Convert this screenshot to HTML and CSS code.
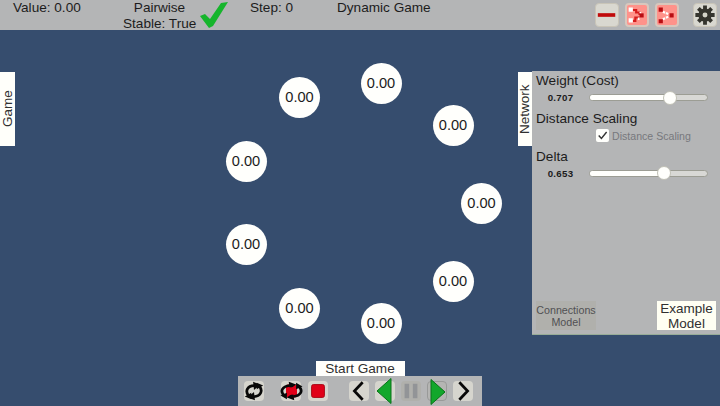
FILE: index.html
```html
<!DOCTYPE html>
<html lang="en">
<head>
<meta charset="utf-8">
<title>Network Game</title>
<link rel="stylesheet" href="styles.css">
</head>
<body>
<div class="app">
  <header class="topbar">
    <span class="value">Value: 0.00</span>
    <span class="stable">Pairwise<br>Stable: True</span>
    <svg class="tick" viewBox="0 0 28 28"><path d="M0 16 5 14 10 19 21 3 28 2 13 26 9 28Z" fill="#16b52c"/></svg>
    <span class="step">Step: 0</span>
    <span class="mode">Dynamic Game</span>
    <div class="tools">
      <button class="tool"><svg viewBox="0 0 24 24"><path d="M2 12H21" stroke="#c00b0b" stroke-width="4"/></svg></button>
      <button class="tool pink"><svg viewBox="0 0 24 24"><path d="M7 6H11V9H15V12M7 19H10V15H15" fill="none" stroke="#d51c1c" stroke-width="2.6"/><path d="M2 3H7V8H2ZM2 16H7V21H2Z" fill="#fff"/><path d="M15 10H20V15H15Z" fill="#b80d12"/><path d="M15 8H17V10H15ZM13 15H15V18H13Z" fill="#fff"/></svg></button>
      <button class="tool pink"><svg viewBox="0 0 24 24"><path d="M7 8 14 11M7 17 14 14" fill="none" stroke="#fff" stroke-width="2.6" stroke-dasharray="3 1"/><path d="M2 3H7V8H2ZM2 17H7V22H2ZM15 10H20V15H15Z" fill="#b80d12"/></svg></button>
      <button class="tool gear"><svg viewBox="0 0 24 24"><g stroke="#35352e" stroke-width="4.2"><path d="M12 1.5V22.5M1.5 12H22.5M4.8 4.8 19.2 19.2M19.2 4.8 4.8 19.2"/></g><circle cx="12" cy="12" r="7.2" fill="#35352e"/><circle cx="12" cy="12" r="2.7" fill="#d4d4c8"/></svg></button>
    </div>
  </header>
  <main class="stage">
    <button class="tab game">Game</button>
    <div class="canvas">
      <span class="node n1">0.00</span><span class="node n2">0.00</span><span class="node n3">0.00</span>
      <span class="node n4">0.00</span><span class="node n5">0.00</span><span class="node n6">0.00</span>
      <span class="node n7">0.00</span><span class="node n8">0.00</span><span class="node n9">0.00</span>
    </div>
    <button class="tab network">Network</button>
    <aside class="panel">
      <h2>Weight (Cost)</h2>
      <div class="row"><b>0.707</b><div class="track"><i class="fill" style="width:68.5%"></i><i class="knob"></i></div></div>
      <h2>Distance Scaling</h2>
      <label class="check"><span class="box"><svg viewBox="0 0 12 12"><path d="M2.5 6 5 8.8 9.8 2.8" fill="none" stroke="#333" stroke-width="1.3"/></svg></span>Distance Scaling</label>
      <h2>Delta</h2>
      <div class="row"><b>0.653</b><div class="track"><i class="fill" style="width:63.5%"></i><i class="knob"></i></div></div>
      <div class="models"><button class="model off">Connections<br>Model</button><button class="model on">Example<br>Model</button></div>
    </aside>
  </main>
  <footer class="dock">
    <button class="start">Start Game</button>
    <div class="controls">
      <button class="ctl"><svg viewBox="0 0 24 24"><g fill="none" stroke="#080808" stroke-width="3"><path d="M6 17C2 12 5 6 12 6M18 7C22 12 19 18 12 18"/></g><path d="M11 2 19 5 12 11ZM13 22 5 19 12 13ZM2 18 9 14 9 21ZM22 6 15 10 15 3Z" fill="#080808"/></svg></button>
      <button class="ctl c2"><svg viewBox="0 0 24 24"><rect x="6" y="5" width="12" height="14" rx="2" fill="#e00018"/><g fill="none" stroke="#080808" stroke-width="3"><path d="M4 17C-1 12 2 7 10 6M20 7C25 12 22 17 14 18"/></g><path d="M9 2 17 5 10 10ZM15 22 7 19 14 14ZM0 17 7 14 7 21ZM24 7 17 10 17 3Z" fill="#080808"/><rect x="8" y="8" width="8" height="8" fill="#e00018"/></svg></button>
      <button class="ctl c3"><svg viewBox="0 0 24 24"><rect x="5" y="5" width="14" height="14" rx="2" fill="#e00018" stroke="#a5000f"/></svg></button>
      <button class="ctl c4"><svg viewBox="0 0 24 24"><path d="M16 2.5 7 12 16 21.5" fill="none" stroke="#080808" stroke-width="3"/></svg></button>
      <button class="ctl c5"><svg viewBox="0 0 24 28"><path d="M18 1.5V26.5L4 14Z" fill="#12a72b" stroke="#087318"/></svg></button>
      <button class="ctl c6"><svg viewBox="0 0 24 24"><path d="M5 4H10V20H5ZM14 4H19V20H14Z" fill="#929497"/></svg></button>
      <button class="ctl c7"><svg viewBox="0 0 24 28"><path d="M5 1.5V26.5L19 14Z" fill="#12a72b" stroke="#087318"/></svg></button>
      <button class="ctl c8"><svg viewBox="0 0 24 24"><path d="M8 2.5 17 12 8 21.5" fill="none" stroke="#080808" stroke-width="3"/></svg></button>
    </div>
  </footer>
</div>
</body>
</html>
```
FILE: styles.css
```css
* { box-sizing: border-box; }
body { margin: 0; font-family: "Liberation Sans", Arial, sans-serif; color: #1c1c1c; }
button { margin: 0; padding: 0; border: 0; font: inherit; color: #303030; }
svg { display: block; width: 100%; height: 100%; overflow: visible; }
.app { width: 720px; height: 406px; overflow: hidden; display: flex; flex-direction: column; background: #364d6e; }
.topbar { height: 30px; flex: none; display: flex; background: #b4b5b6; font-size: 13.6px; line-height: 15.5px; white-space: nowrap; }
.value { margin-left: 13px; width: 110px; }
.stable { width: 73px; text-align: center; }
.tick { width: 28px; height: 28px; margin-left: 4px; }
.step { margin-left: 22px; width: 87px; }
.mode { width: 100px; }
.tools { margin: 3px 3px 0 auto; display: flex; }
.tool { width: 24px; height: 24px; border-radius: 4px; background: #d9d8d0; border: 1px solid #c9c5b8; margin-right: 6px; }
.tool.pink { background: #ff928a; border: 2px solid #d8c7bd; }
.tool.gear { margin: 0 0 0 8px; }
.stage { height: 331px; flex: none; display: flex; align-items: flex-start; }
.tab { flex: none; writing-mode: vertical-rl; transform: rotate(180deg); height: 74px; width: 14px; margin-top: 42px; background: #fffffa; font-size: 13.5px; line-height: 14px; text-align: center; }
.game { width: 15px; }
.canvas { position: relative; width: 503px; height: 331px; }
.node { position: absolute; width: 41px; height: 41px; border-radius: 50%; background: #fffffc; font-size: 14.6px; line-height: 41px; text-align: center; }
.n1 { left: 345.5px; top: 32.5px; } .n2 { left: 417.5px; top: 74.5px; } .n3 { left: 446px; top: 152.5px; }
.n4 { left: 417.5px; top: 231px; } .n5 { left: 345.5px; top: 272.5px; } .n6 { left: 264px; top: 258px; }
.n7 { left: 210.5px; top: 194px; } .n8 { left: 210.5px; top: 111px; } .n9 { left: 264px; top: 47px; }
.panel { width: 188px; height: 264px; margin-top: 41px; background: #b4b5b6; border-bottom: 1px solid #98ad98; display: flex; flex-direction: column; }
.panel h2 { margin: 2px 0 0 4px; font-size: 13.6px; font-weight: 400; line-height: 16px; height: 16px; }
.row { display: flex; align-items: center; height: 17px; margin-bottom: 2.5px; }
.row b { width: 57px; text-align: center; font-size: 9.7px; letter-spacing: .3px; }
.track { width: 119px; height: 7px; border-radius: 4px; background: #d8d8d5; border: 1px solid #9c9d94; display: flex; align-items: center; }
.fill { height: 5px; border-radius: 3px; background: #fffffc; }
.knob { width: 14px; height: 14px; flex: none; border-radius: 50%; background: #fffffc; border: 1px solid #c1c1b6; margin-left: -7px; }
.check { display: flex; align-items: center; height: 18px; margin: 0 0 2px 64px; gap: 3px; font-size: 10.6px; color: #77787d; white-space: nowrap; }
.box { width: 13px; height: 13px; border-radius: 2px; background: #fffffc; flex: none; }
.models { margin-top: auto; padding: 0 4px 4px; display: flex; justify-content: space-between; align-items: flex-end; }
.model { text-align: center; white-space: nowrap; }
.off { width: 60px; height: 29px; background: #b0b0ac; font-size: 10.7px; line-height: 12px; color: #505053; }
.on { width: 59px; height: 29px; background: #fffff3; font-size: 13.5px; line-height: 15px; }
.dock { flex: none; width: 244px; margin-left: 238px; display: flex; flex-direction: column; align-items: center; }
.start { width: 89px; height: 15px; background: #fffffc; font-size: 13.6px; line-height: 15px; }
.controls { width: 244px; height: 30px; background: #b4b5b6; display: flex; align-items: center; padding-left: 6px; }
.ctl { width: 20px; height: 20px; border-radius: 4px; background: #d6d5ce; flex: none; }
.ctl svg { width: 22px; height: 22px; margin: -1px; }
.c2 { margin-left: 17px; } .c3 { margin-left: 7px; } .c4 { margin-left: 21px; }
.c5, .c6, .c7, .c8 { margin-left: 6px; }
.c2 svg { width: 25px; margin-left: -2px; }
.c5 svg, .c7 svg { width: 24px; height: 28px; margin: -4px -2px; }
.c6 { background: #b0b0ac; }
.c7 { background: #b5b5b3; border: 1px solid #999a99; }
```
